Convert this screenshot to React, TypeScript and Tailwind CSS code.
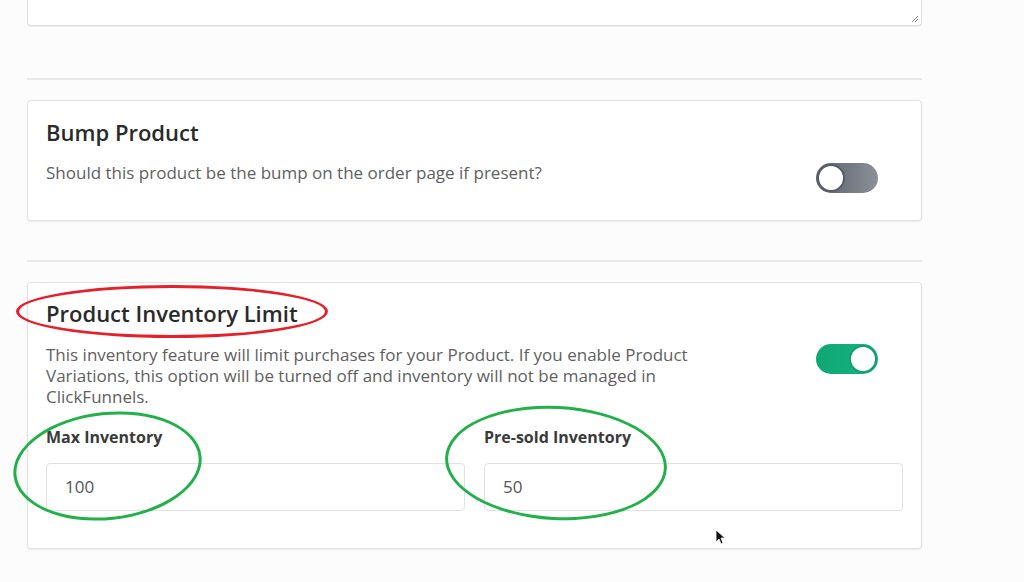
import React from 'react'

function Toggle({ on }: { on: boolean }) {
  if (on) {
    return (
      <div className="relative h-[30px] w-[62px] shrink-0 rounded-full bg-gradient-to-r from-[#0fa874] to-[#17b283]">
        <div className="absolute right-[1px] top-[1px] h-[28px] w-[28px] rounded-full border-2 border-[#129e70] bg-white" />
      </div>
    )
  }
  return (
    <div className="relative h-[30px] w-[62px] shrink-0 rounded-full bg-gradient-to-r from-[#5a606b] to-[#8b9098]">
      <div className="absolute left-[1px] top-[1px] h-[28px] w-[28px] rounded-full border-2 border-[#575d67] bg-white" />
    </div>
  )
}

export default function App() {
  return (
    <div
      className="relative h-[582px] w-[1024px] overflow-hidden bg-[#fcfcfc]"
      style={{ fontFamily: '"Open Sans", "Noto Sans", sans-serif' }}
    >
      <div className="ml-[27px] w-[895px]">
        {/* tail of the textarea above */}
        <div className="relative h-[26px] rounded-b-[4px] border-x border-b border-[#dedede] bg-white shadow-[0_1px_1px_rgba(0,0,0,0.06)]">
          <svg className="absolute bottom-[2px] right-[2px]" width="9" height="9" viewBox="0 0 9 9">
            <path d="M8 2 L2 8 M8 5 L5 8" stroke="#8a8a8a" strokeWidth="1" />
          </svg>
        </div>

        <div className="mt-[52px] h-[2px] bg-[#e9e9e9]" />

        <div className="mt-[20px] rounded-[4px] border border-[#e2e2e2] bg-white px-[18px] pb-[27px] pt-[17px] shadow-[0_1px_2px_rgba(0,0,0,0.08)]">
          <h2 className="text-[22px] font-semibold leading-[28px] text-[#2a2a2a]">Bump Product</h2>
          <div className="mt-4 flex items-start justify-between">
            <p className="text-[17px] leading-[21px] text-[#5f5f5f]">
              Should this product be the bump on the order page if present?
            </p>
            <div className="mr-[25px] mt-px">
              <Toggle on={false} />
            </div>
          </div>
        </div>

        <div className="mt-[39px] h-[2px] bg-[#e9e9e9]" />

        <div className="mt-[20px] rounded-[4px] border border-[#e2e2e2] bg-white px-[18px] pb-[37px] pt-[16px] shadow-[0_1px_2px_rgba(0,0,0,0.08)]">
          <h2 className="text-[22px] font-semibold leading-[28px] text-[#2a2a2a]">Product Inventory Limit</h2>
          <div className="mt-[17px] flex items-start justify-between">
            <p className="w-[660px] text-[17px] leading-[21px] text-[#5f5f5f]">
              This inventory feature will limit purchases for your Product. If you enable Product
              <br />
              Variations, this option will be turned off and inventory will not be managed in
              <br />
              ClickFunnels.
            </p>
            <div className="mr-[25px]">
              <Toggle on={true} />
            </div>
          </div>

          <div className="mt-[20px] grid grid-cols-2 gap-[19px]">
            <div>
              <label className="block text-[16px] font-bold leading-[20px] text-[#3a3a3a]">Max Inventory</label>
              <div className="mt-4 flex h-[48px] items-center rounded-[4px] border border-[#e1e1e1] bg-white pl-[18px] text-[17px] text-[#555]">
                100
              </div>
            </div>
            <div>
              <label className="block text-[16px] font-bold leading-[20px] text-[#3a3a3a]">Pre-sold Inventory</label>
              <div className="mt-4 flex h-[48px] items-center rounded-[4px] border border-[#e1e1e1] bg-white pl-[18px] text-[17px] text-[#555]">
                50
              </div>
            </div>
          </div>
        </div>
      </div>

      {/* hand-drawn annotations */}
      <div className="pointer-events-none absolute left-[16px] top-[285px] h-[53px] w-[312px] rounded-[50%] border-[3px] border-[#e5202b]" />
      <div className="pointer-events-none absolute left-[13px] top-[412px] h-[108px] w-[189px] -rotate-6 rounded-[50%] border-[3px] border-[#22b04b]" />
      <div className="pointer-events-none absolute left-[445px] top-[406px] h-[114px] w-[222px] rotate-3 rounded-[50%] border-[3px] border-[#22b04b]" />

      {/* mouse cursor */}
      <svg className="absolute left-[715px] top-[529px]" width="10" height="16" viewBox="0 0 10 16">
        <path d="M1 1 L1 13 L4 10 L6 15 L8 14 L6 9 L10 9 Z" fill="#111" stroke="#fff" strokeWidth="0.8" />
      </svg>
    </div>
  )
}
